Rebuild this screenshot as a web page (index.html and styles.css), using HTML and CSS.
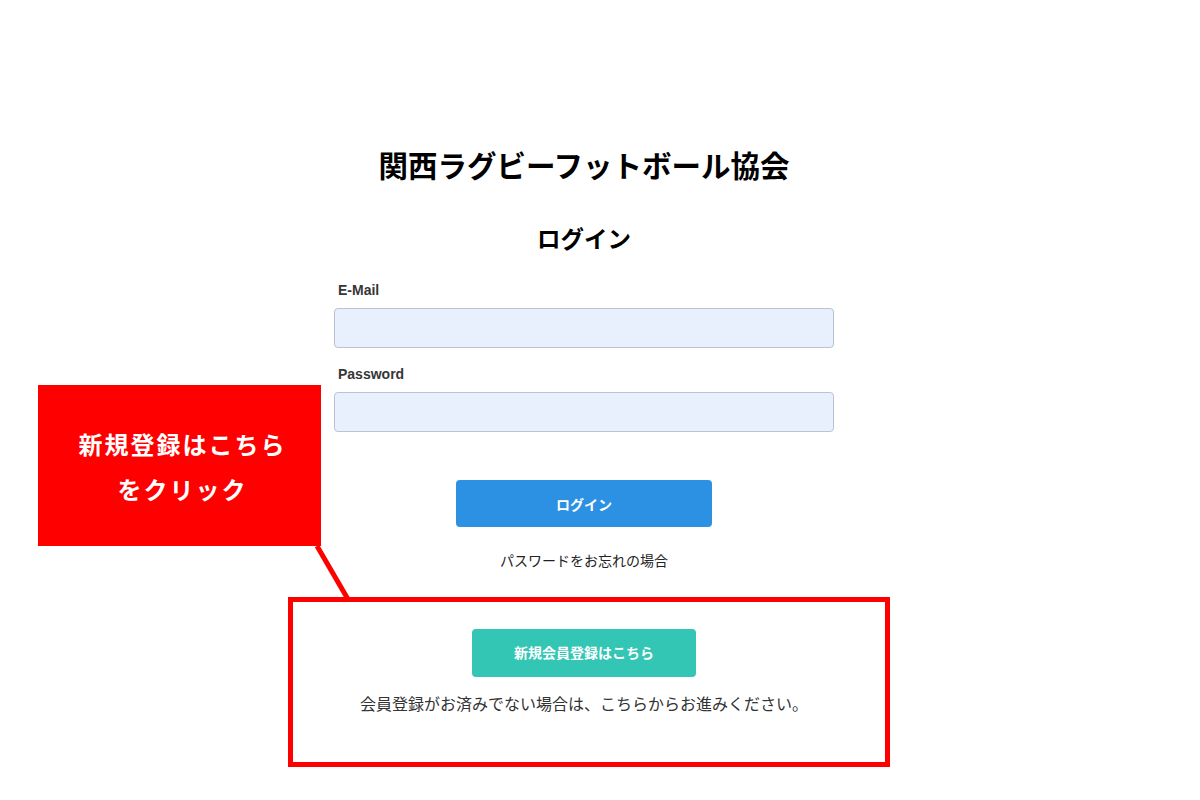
FILE: index.html
```html
<!DOCTYPE html>
<html lang="ja">
<head>
    <meta charset="UTF-8">
    <meta name="viewport" content="width=device-width, initial-scale=1.0">
    <title>ログイン</title>
    <link rel="stylesheet" href="styles.css">
</head>
<body>

    <div class="wrap">
        <h1 class="title">関西ラグビーフットボール協会</h1>
        <h2 class="sub">ログイン</h2>

        <form class="login">
            <label class="label">E-Mail</label>
            <input class="input" type="email">
            <label class="label label2">Password</label>
            <input class="input" type="password">
            <button class="btn-login" type="button">ログイン</button>
        </form>
        <p class="forgot">パスワードをお忘れの場合</p>

        <div class="register">
            <span class="btn-register">新規会員登録はこちら</span>
            <p class="note">会員登録がお済みでない場合は、こちらからお進みください。</p>
        </div>
    </div>

    <!-- 注釈 -->
    <div class="callout">新規登録はこちら<br>をクリック</div>
    <svg class="pointer" width="60" height="70" viewBox="0 0 60 70">
        <line x1="8" y1="0" x2="40" y2="55" stroke="#ff0000" stroke-width="5"/>
    </svg>
    <div class="frame"></div>

</body>
</html>
```

FILE: styles.css
```css
        html,body,h1,h2,p,form{
            margin: 0;padding: 0;
        }
        body{
            background: #fff;color: #111;
            font-family: "Liberation Sans", "Noto Sans CJK JP", sans-serif;
        }
        .wrap{
            width: 500px;margin-left: 334px;padding-top: 149px;
        }
        .title{
            font-size: 29.5px;line-height: 36px;text-align: center;font-weight: bold;color: #000;
        }
        .sub{
            margin-top: 40px;font-size: 23.5px;line-height: 30px;text-align: center;font-weight: bold;color: #000;
        }
        .login{
            display: flex;flex-direction: column;margin-top: 25px;
        }
        .label{
            font-size: 14px;line-height: 20px;font-weight: bold;color: #363636;padding-left: 4px;
        }
        .label2{
            margin-top: 16px;
        }
        .input{
            margin-top: 8px;height: 40px;box-sizing: border-box;width: 500px;
            background: #e8f0fe;border: 1px solid #b9c3d3;border-radius: 4px;outline: none;
        }
        .btn-login{
            align-self: center;margin-top: 48px;width: 256px;height: 47px;border: none;border-radius: 4px;
            background: #2d91e3;color: #fff;font-size: 14px;font-weight: bold;cursor: pointer;
            font-family: "Liberation Sans", "Noto Sans CJK JP", sans-serif;
        }
        .forgot{
            margin-top: 24px;font-size: 14px;line-height: 20px;text-align: center;color: #222;
        }
        .register{
            margin-top: 26px;border-top: 1px solid #e2e2e2;padding-top: 31px;
            display: flex;flex-direction: column;align-items: center;
        }
        .btn-register{
            display: block;width: 224px;height: 48px;line-height: 48px;border-radius: 4px;text-align: center;
            background: #33c6b4;color: #fff;font-size: 14px;font-weight: bold;
        }
        .note{
            margin-top: 16px;width: 600px;font-size: 16px;line-height: 24px;text-align: center;color: #333;
        }
        .callout{
            position: absolute;left: 38px;top: 385px;width: 283px;height: 161px;box-sizing: border-box;
            padding: 38px 0 0 6px;background: #ff0000;color: #fff;text-align: center;
            font-size: 24px;line-height: 45px;font-weight: bold;letter-spacing: 2px;
        }
        .pointer{
            position: absolute;left: 309px;top: 546px;
        }
        .frame{
            position: absolute;left: 288px;top: 597px;width: 602px;height: 170px;box-sizing: border-box;
            border: 5px solid #ff0000;
        }
```
